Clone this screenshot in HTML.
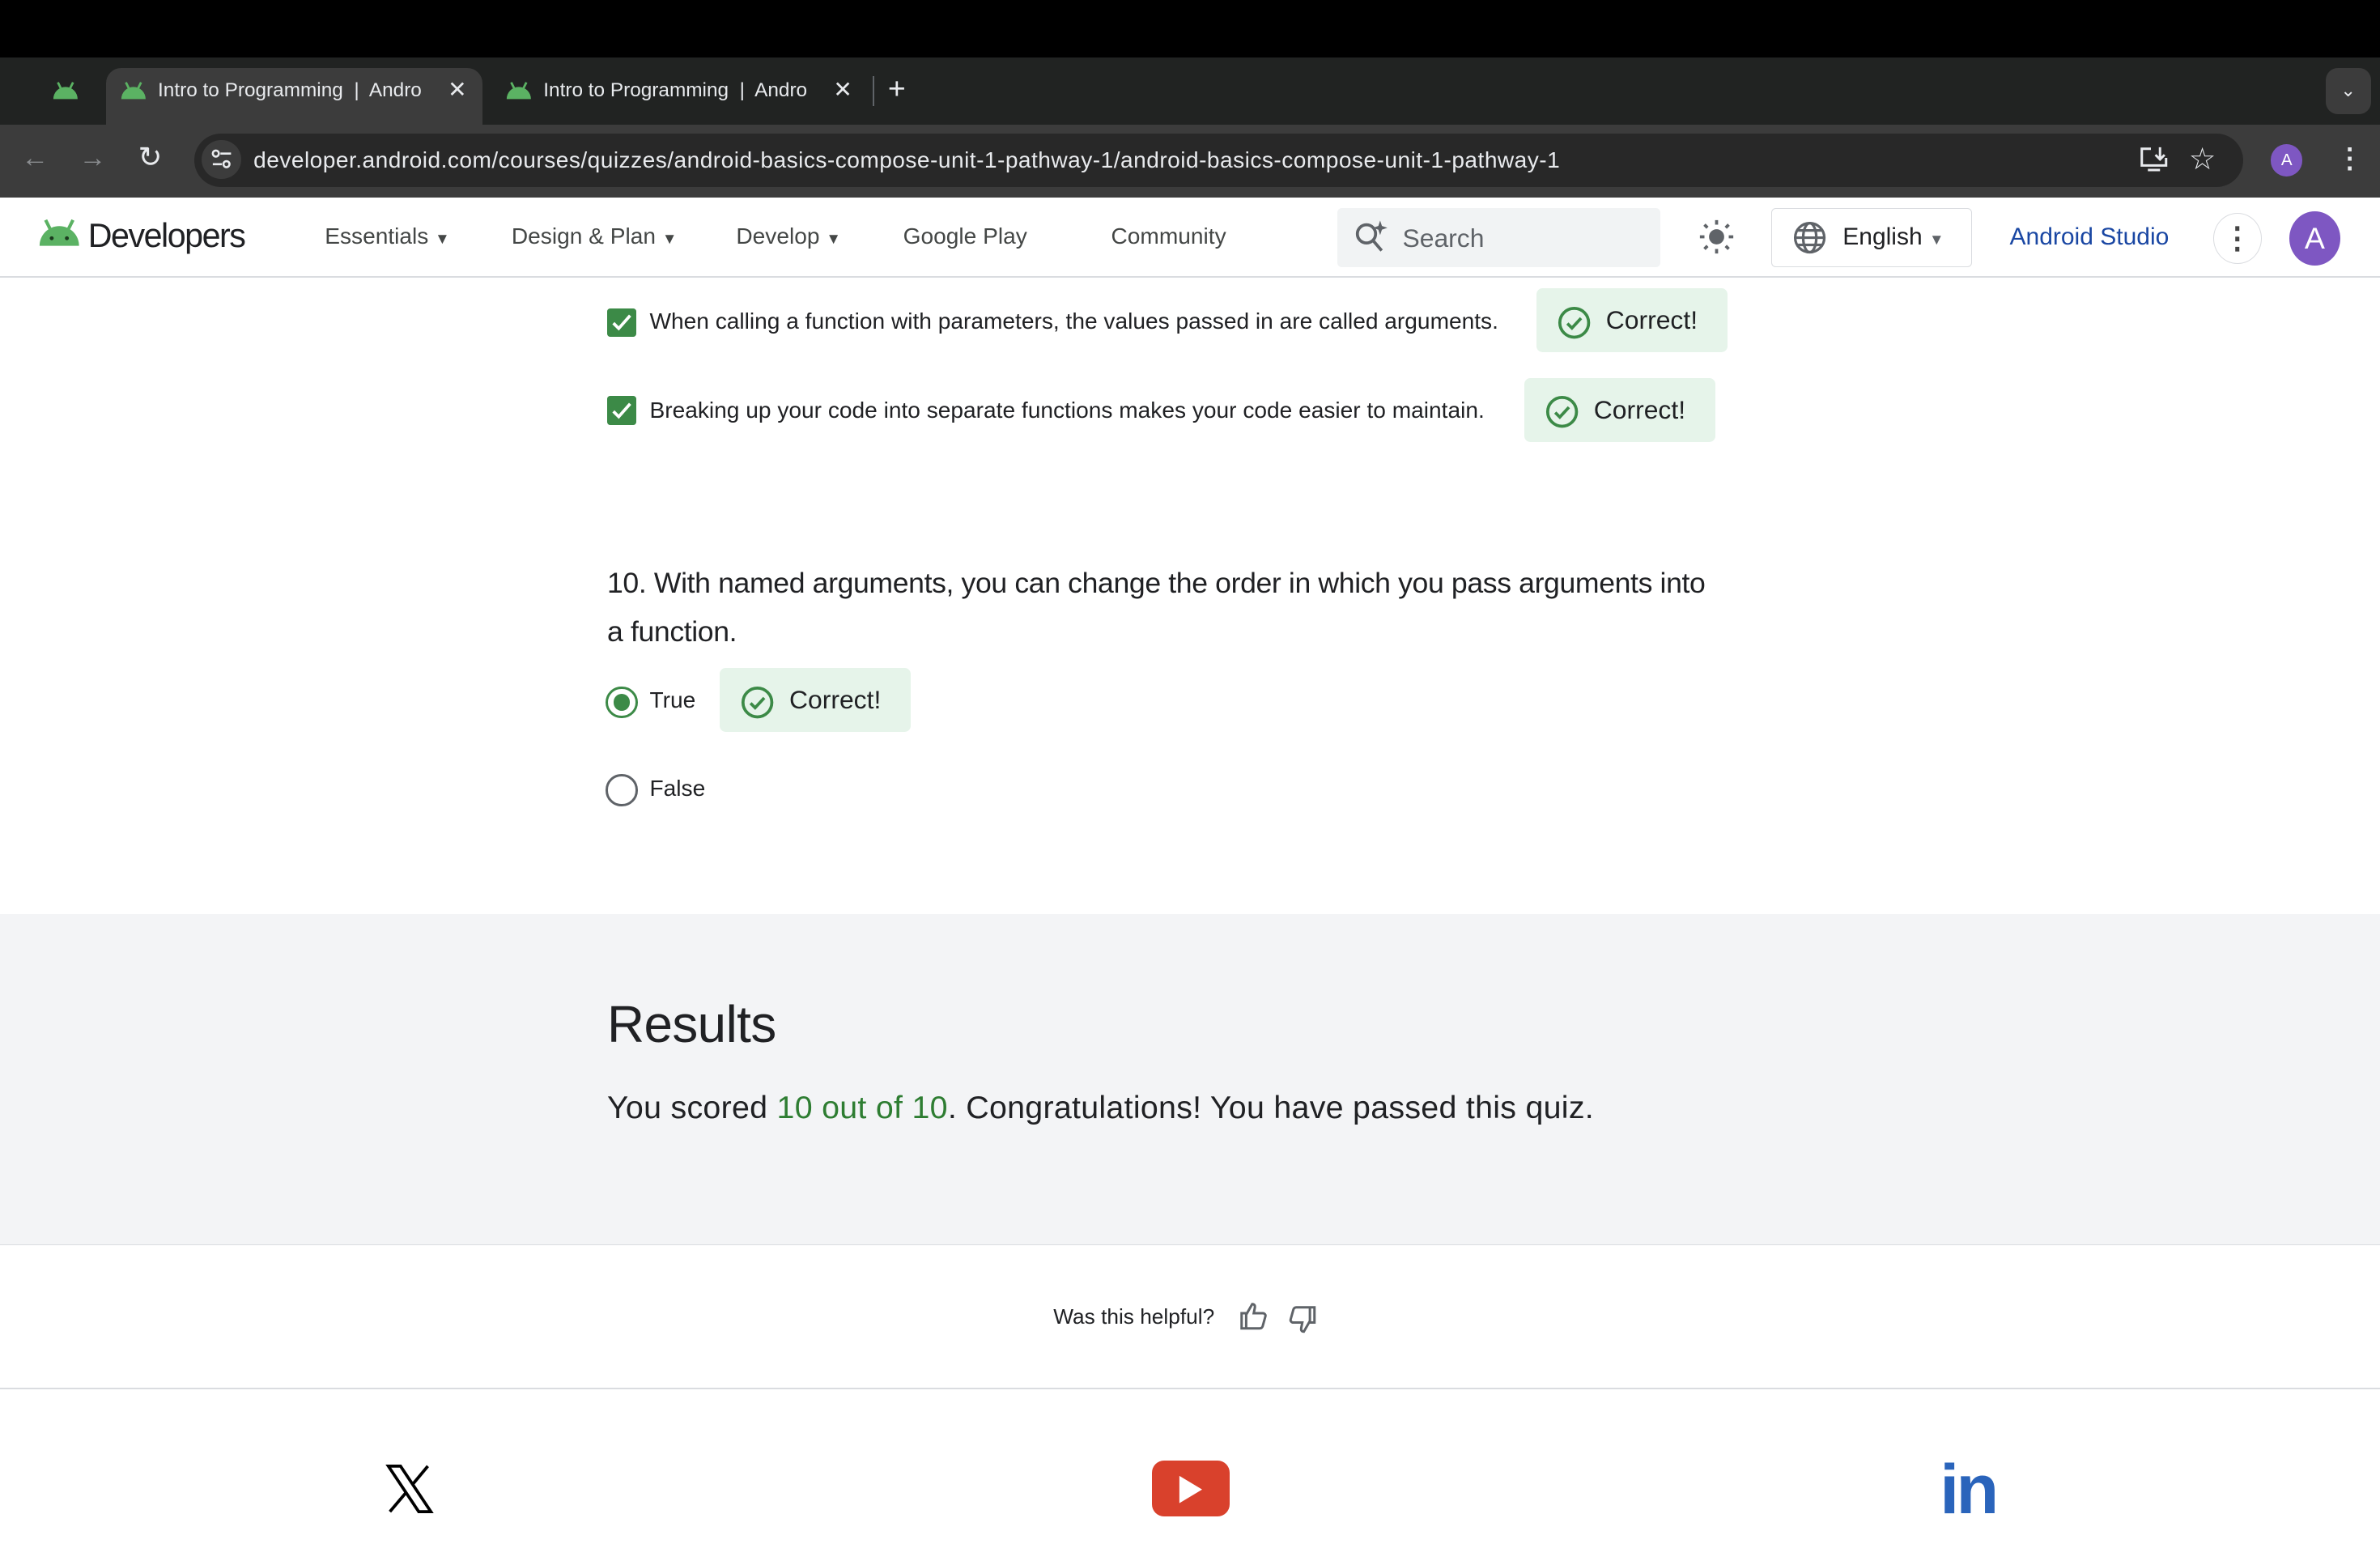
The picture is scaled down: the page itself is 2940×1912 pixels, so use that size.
<!DOCTYPE html>
<html><head><meta charset="utf-8"><style>
*{box-sizing:border-box;margin:0;padding:0}
html,body{width:2940px;height:1912px;overflow:hidden;background:#fff}
#w{width:1568px;height:1020px;zoom:1.875;position:relative;font-family:"Liberation Sans",Arial,sans-serif;overflow:hidden}
.a{position:absolute}
.t{white-space:nowrap}
.badge{position:absolute;background:#e6f4ea;border-radius:4px;height:42px;display:flex;align-items:center;padding:0 13px 0 14px;font-size:17px;color:#202124}
.badge svg{margin-right:10px;margin-top:3px}
.cb{position:absolute;width:19px;height:19px;background:#3c8a47;border-radius:2px}
.lbl{position:absolute;font-size:15px;color:#202124;white-space:nowrap}
.nav{position:absolute;top:147px;font-size:15px;color:#444746;white-space:nowrap}
</style></head><body><div id="w">
<div class="a" style="left:0;top:0;width:1568px;height:38px;background:#000"></div>
<div class="a" style="left:0;top:38px;width:1568px;height:44px;background:#212322"></div>
<div class="a" style="left:70px;top:45px;width:248px;height:40px;background:#3c3c3c;border-radius:10px 10px 0 0"></div>
<div class="a" style="left:0;top:82px;width:1568px;height:48px;background:#3c3c3c"></div>
<svg class="a" style="left:34px;top:52px" width="18" height="14" viewBox="0 0 18 14"><path d="M1 13a8 8 0 0 1 16 0z" fill="#5bb263"/><path d="M4 2l2 4M14 2l-2 4" stroke="#5bb263" stroke-width="1.5"/></svg>
<svg class="a" style="left:79px;top:52px" width="18" height="14" viewBox="0 0 18 14"><path d="M1 13a8 8 0 0 1 16 0z" fill="#5bb263"/><path d="M4 2l2 4M14 2l-2 4" stroke="#5bb263" stroke-width="1.5"/></svg>
<svg class="a" style="left:333px;top:52px" width="18" height="14" viewBox="0 0 18 14"><path d="M1 13a8 8 0 0 1 16 0z" fill="#5bb263"/><path d="M4 2l2 4M14 2l-2 4" stroke="#5bb263" stroke-width="1.5"/></svg>
<div class="a t" style="left:104px;top:52px;font-size:13px;color:#e8eaed;width:180px;overflow:hidden">Intro to Programming &nbsp;|&nbsp; Andro</div>
<div class="a t" style="left:295px;top:50px;font-size:15px;color:#e8eaed">✕</div>
<div class="a t" style="left:358px;top:52px;font-size:13px;color:#e8eaed;width:180px;overflow:hidden">Intro to Programming &nbsp;|&nbsp; Andro</div>
<div class="a t" style="left:549px;top:50px;font-size:15px;color:#e8eaed">✕</div>
<div class="a" style="left:575px;top:50px;width:1px;height:20px;background:#5f6368"></div>
<div class="a t" style="left:585px;top:47px;font-size:20px;color:#e8eaed">+</div>
<div class="a" style="left:1532px;top:45px;width:30px;height:30px;background:#3c3c3c;border-radius:8px;color:#e8eaed;font-size:12px;text-align:center;line-height:30px">⌄</div>
<div class="a t" style="left:14px;top:94px;font-size:18px;color:#8a8d90">←</div>
<div class="a t" style="left:52px;top:94px;font-size:18px;color:#8a8d90">→</div>
<div class="a t" style="left:91px;top:93px;font-size:19px;color:#e8eaed">↻</div>
<div class="a" style="left:128px;top:88px;width:1350px;height:35px;background:#282828;border-radius:18px"></div>
<div class="a" style="left:133px;top:92px;width:26px;height:26px;background:#3c3c3c;border-radius:50%"></div>
<svg class="a" style="left:139px;top:98px" width="14" height="14" viewBox="0 0 14 14" fill="none" stroke="#e8eaed" stroke-width="1.4"><circle cx="3" cy="3" r="2"/><path d="M6 3h7M1 10h6"/><circle cx="10" cy="10" r="2"/></svg>
<div class="a t" style="left:167px;top:97px;font-size:15px;color:#e8eaed;letter-spacing:0.25px">developer.android.com/courses/quizzes/android-basics-compose-unit-1-pathway-1/android-basics-compose-unit-1-pathway-1</div>
<svg class="a" style="left:1409px;top:96px" width="20" height="18" viewBox="0 0 20 18" fill="none" stroke="#e8eaed" stroke-width="1.6"><path d="M8 2H2v11h16V8M6 16h8M14 1v8M11 6l3 3 3-3"/></svg>
<div class="a t" style="left:1442px;top:93px;font-size:20px;color:#e8eaed">☆</div>
<div class="a" style="left:1496px;top:95px;width:21px;height:21px;border-radius:50%;background:#7e57c2;color:#fff;font-size:11px;text-align:center;line-height:21px">A</div>
<div class="a t" style="left:1539px;top:94px;font-size:18px;color:#e8eaed;font-weight:bold">⋮</div>
<div class="a" style="left:0;top:182px;width:1568px;height:1px;background:#dadce0"></div>
<svg class="a" style="left:25px;top:143px" width="28" height="20" viewBox="0 0 28 20"><path d="M1 19a13 13 0 0 1 26 0z" fill="#5bb263"/><path d="M5 2l3 6M23 2l-3 6" stroke="#5bb263" stroke-width="2.2"/><circle cx="9" cy="14" r="1.3" fill="#1b3a1e"/><circle cx="19" cy="14" r="1.3" fill="#1b3a1e"/></svg>
<div class="a t" style="left:58px;top:143px;font-size:22px;color:#202124;letter-spacing:-0.8px">Developers</div>
<div class="nav" style="left:214px">Essentials <span style="font-size:10px">▼</span></div>
<div class="nav" style="left:337px">Design &amp; Plan <span style="font-size:10px">▼</span></div>
<div class="nav" style="left:485px">Develop <span style="font-size:10px">▼</span></div>
<div class="nav" style="left:595px">Google Play</div>
<div class="nav" style="left:732px">Community</div>
<div class="a" style="left:881px;top:137px;width:213px;height:39px;background:#f1f3f4;border-radius:3px"></div>
<svg class="a" style="left:892px;top:145px" width="22" height="22" viewBox="0 0 22 22" fill="none" stroke="#5f6368" stroke-width="2"><circle cx="8" cy="9" r="6"/><path d="M12 13l6 7"/><path d="M17 1l1 3 3 1-3 1-1 3-1-3-3-1 3-1z" fill="#5f6368" stroke-width="0.5"/></svg>
<div class="a t" style="left:924px;top:147px;font-size:17px;color:#5f6368">Search</div>
<svg class="a" style="left:1119px;top:144px" width="24" height="24" viewBox="0 0 24 24" fill="#5f6368"><circle cx="12" cy="12" r="5"/><g stroke="#5f6368" stroke-width="2"><path d="M12 1v3M12 20v3M1 12h3M20 12h3M4 4l2 2M18 18l2 2M4 20l2-2M18 6l2-2"/></g></svg>
<div class="a" style="left:1167px;top:137px;width:132px;height:39px;border:1px solid #dadce0;border-radius:3px"></div>
<svg class="a" style="left:1181px;top:145px" width="23" height="23" viewBox="0 0 24 24" fill="none" stroke="#5f6368" stroke-width="1.8"><circle cx="12" cy="12" r="10"/><ellipse cx="12" cy="12" rx="4.5" ry="10"/><path d="M2 12h20M4 7h16M4 17h16"/></svg>
<div class="a t" style="left:1214px;top:147px;font-size:16px;color:#202124">English <span style="font-size:10px;color:#5f6368">▼</span></div>
<div class="a t" style="left:1324px;top:147px;font-size:16px;color:#1a47a3">Android Studio</div>
<div class="a" style="left:1458px;top:140px;width:32px;height:34px;border:1px solid #dadce0;border-radius:50%;text-align:center;font-size:20px;line-height:32px;color:#444;font-weight:bold">⋮</div>
<div class="a" style="left:1508px;top:139px;width:34px;height:36px;border-radius:50%;background:#7e57c2;color:#fff;font-size:20px;text-align:center;line-height:36px">A</div>
<div class="cb" style="left:400px;top:203px"></div>
<svg class="a" style="left:402px;top:206px" width="15" height="13" viewBox="0 0 15 13"><path d="M2 7l3.5 3.5L13 2" fill="none" stroke="#fff" stroke-width="2"/></svg>
<div class="lbl" style="left:428px;top:203px">When calling a function with parameters, the values passed in are called arguments.</div>
<div class="badge" style="left:1012px;top:190px;width:126px"><svg width="22" height="22" viewBox="0 0 22 22" fill="none" stroke="#3c8a47" stroke-width="2"><circle cx="11" cy="11" r="9.5"/><path d="M6.5 11.5l3 3 6-6.5"/></svg>Correct!</div>
<div class="cb" style="left:400px;top:261px"></div>
<svg class="a" style="left:402px;top:264px" width="15" height="13" viewBox="0 0 15 13"><path d="M2 7l3.5 3.5L13 2" fill="none" stroke="#fff" stroke-width="2"/></svg>
<div class="lbl" style="left:428px;top:262px">Breaking up your code into separate functions makes your code easier to maintain.</div>
<div class="badge" style="left:1004px;top:249px;width:126px"><svg width="22" height="22" viewBox="0 0 22 22" fill="none" stroke="#3c8a47" stroke-width="2"><circle cx="11" cy="11" r="9.5"/><path d="M6.5 11.5l3 3 6-6.5"/></svg>Correct!</div>
<div class="a" style="left:400px;top:368px;width:730px;font-size:19px;line-height:32px;color:#202124;letter-spacing:-0.2px">10. With named arguments, you can change the order in which you pass arguments into a function.</div>
<div class="a" style="left:399px;top:452px;width:21px;height:21px;border:2px solid #3c8a47;border-radius:50%"></div>
<div class="a" style="left:404px;top:457px;width:11px;height:11px;background:#3c8a47;border-radius:50%"></div>
<div class="lbl" style="left:428px;top:453px">True</div>
<div class="badge" style="left:474px;top:440px;width:126px"><svg width="22" height="22" viewBox="0 0 22 22" fill="none" stroke="#3c8a47" stroke-width="2"><circle cx="11" cy="11" r="9.5"/><path d="M6.5 11.5l3 3 6-6.5"/></svg>Correct!</div>
<div class="a" style="left:399px;top:510px;width:21px;height:21px;border:2px solid #5f6368;border-radius:50%"></div>
<div class="lbl" style="left:428px;top:511px">False</div>
<div class="a" style="left:0;top:602px;width:1568px;height:218px;background:#f3f4f6;border-bottom:1px solid #dadce0"></div>
<div class="a t" style="left:400px;top:655px;font-size:34px;color:#202124;letter-spacing:-0.3px">Results</div>
<div class="a t" style="left:400px;top:718px;font-size:21px;color:#202124;letter-spacing:0.15px">You scored <span style="color:#2e7d32">10 out of 10</span>. Congratulations! You have passed this quiz.</div>
<div class="a t" style="left:694px;top:859px;font-size:14px;color:#202124">Was this helpful?</div>
<svg class="a" style="left:816px;top:857px" width="20" height="20" viewBox="0 0 20 20" fill="none" stroke="#5f6368" stroke-width="1.6"><path d="M2 8h3v10H2zM5 9l4-7c1.5 0 2 1 1.7 2.5L10 8h6c1 0 2 1 1.7 2l-1.8 6.5c-.3.9-1 1.5-2 1.5H5"/></svg>
<svg class="a" style="left:848px;top:859px" width="20" height="20" viewBox="0 0 20 20" fill="none" stroke="#5f6368" stroke-width="1.6" transform="rotate(180)"><path d="M2 8h3v10H2zM5 9l4-7c1.5 0 2 1 1.7 2.5L10 8h6c1 0 2 1 1.7 2l-1.8 6.5c-.3.9-1 1.5-2 1.5H5"/></svg>
<div class="a" style="left:0;top:914px;width:1568px;height:1px;background:#dadce0"></div>
<svg class="a" style="left:254px;top:965px" width="32" height="32" viewBox="0 0 32 32"><path d="M2 1h8l20 30h-8z" fill="none" stroke="#000" stroke-width="2"/><path d="M28 1L18 13M3 31l11-13" stroke="#000" stroke-width="2"/></svg>
<div class="a" style="left:759px;top:962px;width:51px;height:37px;background:#d9412c;border-radius:8px"></div>
<svg class="a" style="left:776px;top:971px" width="18" height="20" viewBox="0 0 18 20"><path d="M1 1l15 9-15 9z" fill="#fff"/></svg>
<div class="a t" style="left:1278px;top:955px;font-size:46px;font-weight:bold;color:#2a64bb;letter-spacing:-2px">in</div>
</div></body></html>
